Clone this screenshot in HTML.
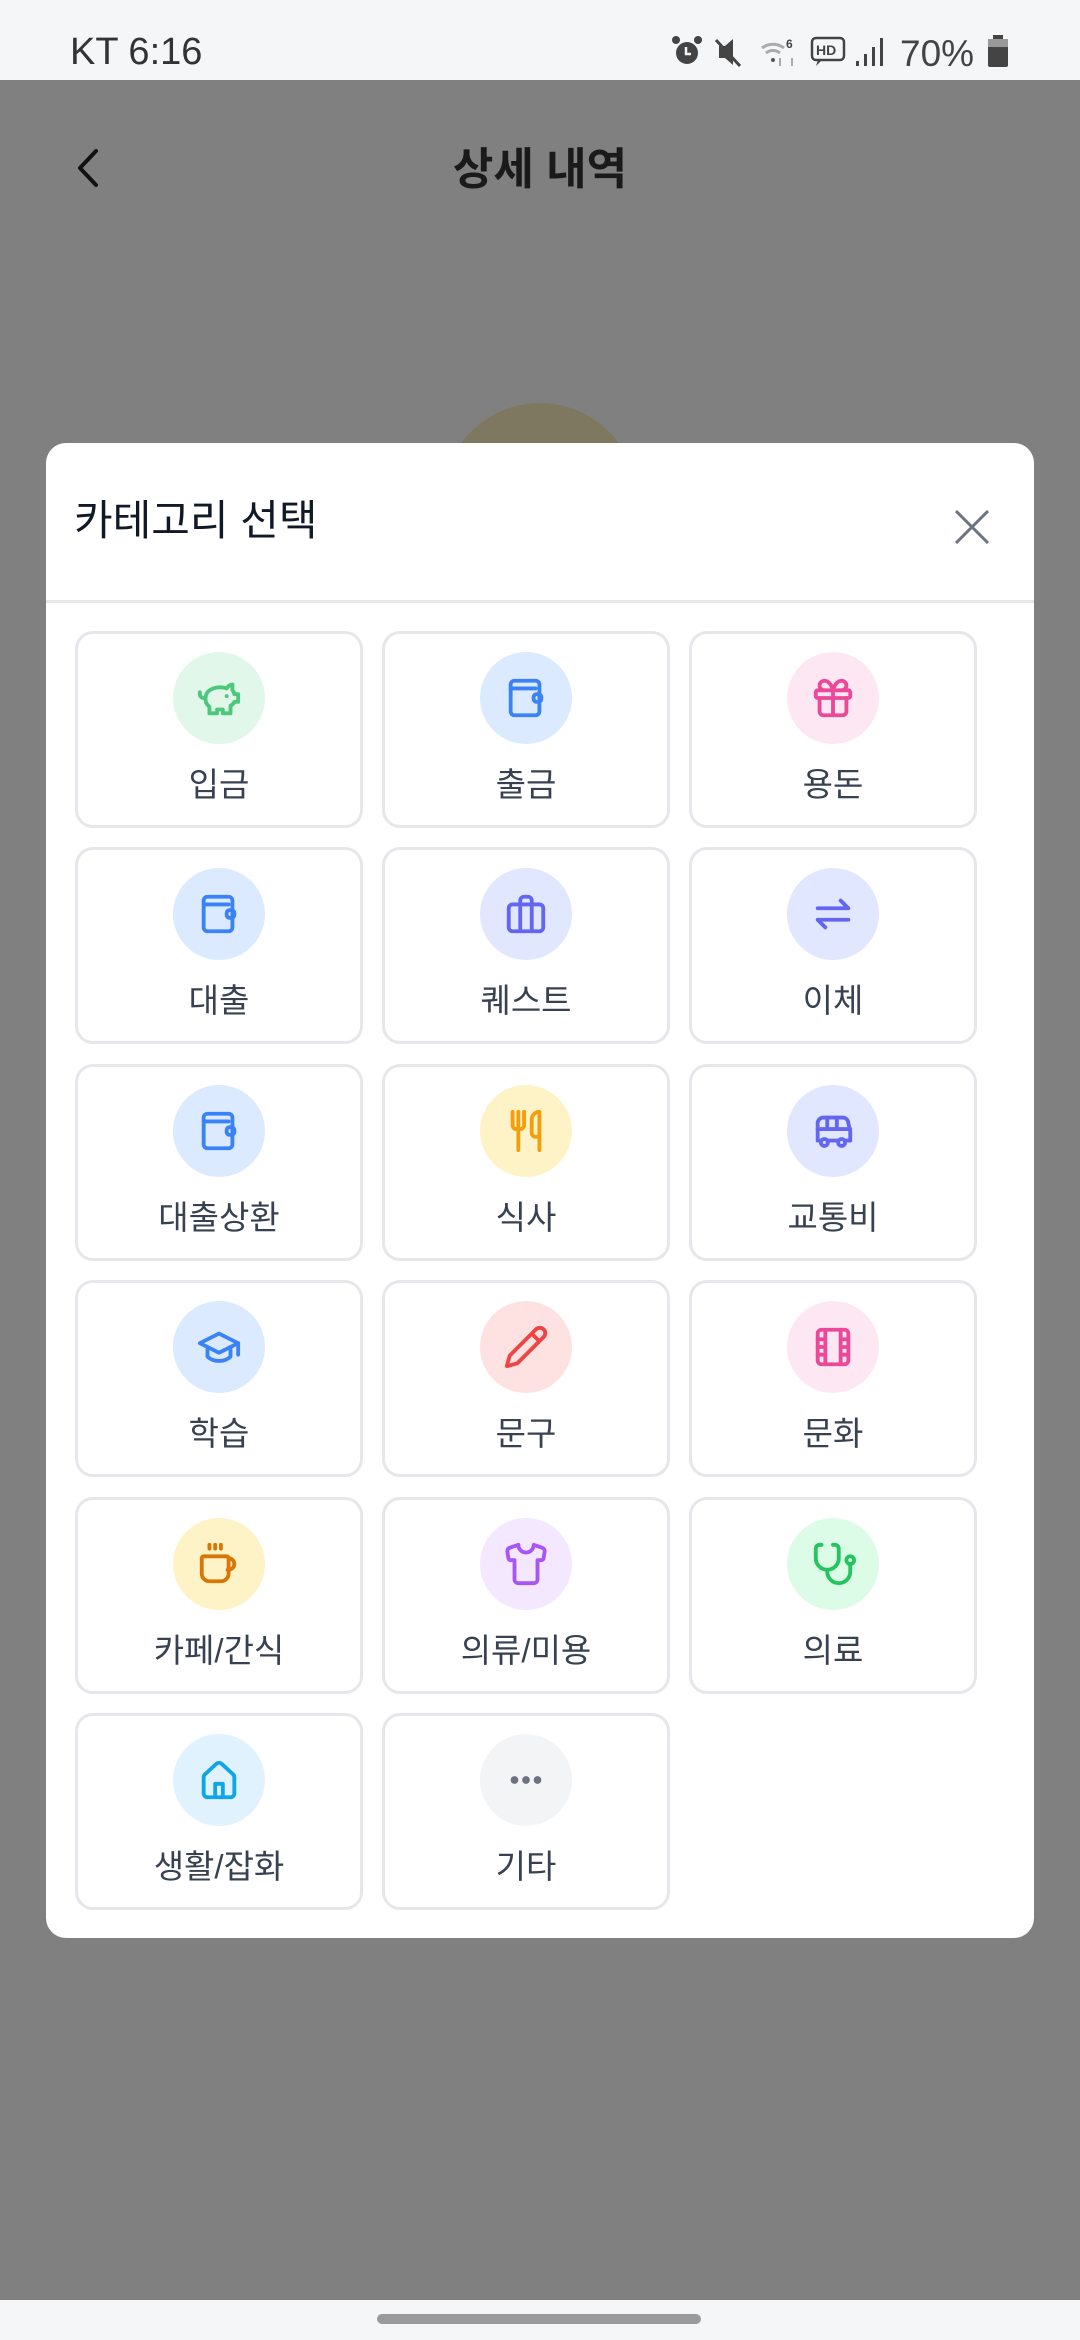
<!DOCTYPE html>
<html><head><meta charset="utf-8">
<style>
*{margin:0;padding:0;box-sizing:border-box}
body{width:1080px;height:2340px;position:relative;overflow:hidden;background:#808080;font-family:"Liberation Sans","Noto Sans CJK KR",sans-serif}
.sb{position:absolute;left:0;top:0;width:1080px;height:80px;background:#f5f6f8}
.nav{position:absolute;left:0;top:2300px;width:1080px;height:40px;background:#f5f6f8}
.home{position:absolute;left:377px;top:2314px;width:324px;height:10px;border-radius:5px;background:#9a9a9c}
.modal{position:absolute;left:46px;top:443px;width:988px;height:1495px;background:#fff;border-radius:20px}
.card{position:absolute;width:288px;height:197px;border:3px solid #e6e7ea;border-radius:18px;background:#fff}
.circ{position:absolute;left:95px;top:18px;width:92px;height:92px;border-radius:50%;display:flex;align-items:center;justify-content:center}
.lbl{position:absolute;left:0;right:0;top:131px;text-align:center;font-size:33px;color:#374151;line-height:40px}
svg.i{width:46px;height:46px;fill:none;stroke-width:2;stroke-linecap:round;stroke-linejoin:round}
</style></head><body>
<div class="sb">
 <div style="position:absolute;left:70px;top:30px;font-size:38px;color:#333;line-height:44px">KT 6:16</div>
 <svg style="position:absolute;left:670px;top:34px" width="340" height="36" viewBox="0 0 340 36">
  <g fill="#444">
   <circle cx="17" cy="19" r="11"/><circle cx="6" cy="6" r="4"/><circle cx="28" cy="6" r="4"/>
   <path d="M49 12h6l8-7v26l-8-7h-6z"/>
  </g>
  <path d="M16 13v7h5" stroke="#f5f6f8" stroke-width="2.5" fill="none"/>
  <path d="M46 6l24 26" stroke="#444" stroke-width="3"/>
  <path d="M92 14a18 18 0 0 1 22 0M96 19a11 11 0 0 1 14 0" stroke="#aaa" stroke-width="3" fill="none"/>
  <circle cx="103" cy="26" r="2" fill="#555"/>
  <text x="116" y="14" font-size="12" font-weight="bold" fill="#444" font-family="Liberation Sans">6</text>
  <path d="M110 24v8M122 32v-8" stroke="#aaa" stroke-width="2"/>
  <rect x="142" y="4" width="32" height="22" rx="4" stroke="#444" stroke-width="2.5" fill="none"/>
  <path d="M148 26l-2 6 6-6" fill="#444"/>
  <text x="146" y="21" font-size="14" font-weight="bold" fill="#444" font-family="Liberation Sans">HD</text>
  <rect x="186" y="27" width="3" height="5" fill="#444"/><rect x="194" y="20" width="3" height="12" fill="#444"/><rect x="202" y="13" width="3" height="19" fill="#444"/><rect x="210" y="4" width="3" height="28" fill="#444"/>
  <text x="230" y="32" font-size="37" fill="#444" font-family="Liberation Sans">70%</text>
  <rect x="318" y="5" width="20" height="28" rx="2" fill="#444"/><rect x="323" y="1" width="10" height="5" fill="#444"/><rect x="318" y="5" width="20" height="8" fill="#999"/>
 </svg>
</div>
<svg style="position:absolute;left:70px;top:145px" width="36" height="46" viewBox="0 0 36 46"><path d="M26 6L10 23l16 17" stroke="#111" stroke-width="4" fill="none" stroke-linecap="round" stroke-linejoin="round"/></svg>
<div style="position:absolute;left:0;width:1080px;top:142px;text-align:center;font-size:44px;font-weight:bold;color:#1a1a1a;line-height:56px">상세 내역</div>
<div style="position:absolute;left:443px;top:403px;width:194px;height:194px;border-radius:50%;background:#7e7860"></div>
<div class="modal">
 <div style="position:absolute;left:28px;top:50px;font-size:42px;color:#111827;line-height:56px">카테고리 선택</div>
 <svg style="position:absolute;left:906px;top:64px" width="40" height="40" viewBox="0 0 40 40"><path d="M4 4l32 32M36 4L4 36" stroke="#6b7280" stroke-width="3"/></svg>
 <div style="position:absolute;left:0;top:157px;width:988px;height:3px;background:#e5e7eb"></div>
</div>
<div class="nav"></div><div class="home"></div>

<div class="card" style="left:75px;top:631px"><div class="circ" style="background:#e0f7ea"><svg class="i" viewBox="0 0 24 24" stroke="#4cc77c"><path d="M19 5c-1.5 0-2.8 1.4-3 2-3.5-1.5-11-.3-11 5 0 1.8 0 3 2 4.5V20h4v-2h3v2h4v-4c1-.5 1.7-1 2-2h2v-4h-2c0-1-.5-1.5-1-2V5z"/><path d="M2 9v1c0 1.1.9 2 2 2h1"/><path d="M16 11h.01"/></svg></div><div class="lbl">입금</div></div>
<div class="card" style="left:382px;top:631px"><div class="circ" style="background:#dbeafe"><svg class="i" viewBox="0 0 24 24" stroke="#3b82f6"><rect x="4" y="3" width="15" height="18" rx="2"/><path d="M4 7h13"/><rect x="16" y="10" width="4" height="4" rx="1.5"/></svg></div><div class="lbl">출금</div></div>
<div class="card" style="left:689px;top:631px"><div class="circ" style="background:#fce7f3"><svg class="i" viewBox="0 0 24 24" stroke="#ec4899"><rect x="3" y="8" width="18" height="4" rx="1"/><path d="M12 8v13"/><path d="M19 12v7a2 2 0 0 1-2 2H7a2 2 0 0 1-2-2v-7"/><path d="M7.5 8a2.5 2.5 0 0 1 0-5A4.8 8 0 0 1 12 8a4.8 8 0 0 1 4.5-5 2.5 2.5 0 0 1 0 5"/></svg></div><div class="lbl">용돈</div></div>

<div class="card" style="left:75px;top:847px"><div class="circ" style="background:#dbeafe"><svg class="i" viewBox="0 0 24 24" stroke="#3b82f6"><rect x="4" y="3" width="15" height="18" rx="2"/><path d="M4 7h13"/><rect x="16" y="10" width="4" height="4" rx="1.5"/></svg></div><div class="lbl">대출</div></div>
<div class="card" style="left:382px;top:847px"><div class="circ" style="background:#e0e7ff"><svg class="i" viewBox="0 0 24 24" stroke="#6366f1"><rect x="3" y="7" width="18" height="14" rx="2"/><path d="M9 7V5a2 2 0 0 1 2-2h2a2 2 0 0 1 2 2v2"/><path d="M9 7v14M15 7v14"/></svg></div><div class="lbl">퀘스트</div></div>
<div class="card" style="left:689px;top:847px"><div class="circ" style="background:#e0e7ff"><svg class="i" viewBox="0 0 24 24" stroke="#6366f1"><path d="M4 9h16l-4-4"/><path d="M20 15H4l4 4"/></svg></div><div class="lbl">이체</div></div>

<div class="card" style="left:75px;top:1064px"><div class="circ" style="background:#dbeafe"><svg class="i" viewBox="0 0 24 24" stroke="#3b82f6"><rect x="4" y="3" width="15" height="18" rx="2"/><path d="M4 7h13"/><rect x="16" y="10" width="4" height="4" rx="1.5"/></svg></div><div class="lbl">대출상환</div></div>
<div class="card" style="left:382px;top:1064px"><div class="circ" style="background:#fef3c7"><svg class="i" viewBox="0 0 24 24" stroke="#f59e0b"><path d="M5 2v7c0 1.1.9 2 2 2h2a2 2 0 0 0 2-2V2"/><path d="M8 2v20"/><path d="M19 15V2a4 4 0 0 0-4 4v7c0 1.1.9 2 2 2h2zm0 0v7"/></svg></div><div class="lbl">식사</div></div>
<div class="card" style="left:689px;top:1064px"><div class="circ" style="background:#e0e7ff"><svg class="i" viewBox="0 0 24 24" stroke="#6366f1"><path d="M4 17V8a3 3 0 0 1 3-3h10a3 3 0 0 1 3 3l1 4v5z"/><path d="M4 11h17M9 5v6M14 5v6"/><circle cx="7.5" cy="18" r="1.8" style="fill:#e0e7ff"/><circle cx="16.5" cy="18" r="1.8" style="fill:#e0e7ff"/></svg></div><div class="lbl">교통비</div></div>

<div class="card" style="left:75px;top:1280px"><div class="circ" style="background:#dbeafe"><svg class="i" viewBox="0 0 24 24" stroke="#3b82f6"><path d="M22 10v6"/><path d="M2 10l10-5 10 5-10 5z"/><path d="M6 12v5c3 3 9 3 12 0v-5"/></svg></div><div class="lbl">학습</div></div>
<div class="card" style="left:382px;top:1280px"><div class="circ" style="background:#fee2e2"><svg class="i" viewBox="0 0 24 24" stroke="#ef4444"><path d="M17 3a2.85 2.83 0 1 1 4 4L7.5 20.5 2 22l1.5-5.5z"/><path d="M15 5l4 4"/></svg></div><div class="lbl">문구</div></div>
<div class="card" style="left:689px;top:1280px"><div class="circ" style="background:#fce7f3"><svg class="i" viewBox="0 0 24 24" stroke="#ec4899"><rect x="4" y="3" width="16" height="18" rx="2"/><path d="M8 3v18M16 3v18M4 8h4M4 12h4M4 16h4M16 8h4M16 12h4M16 16h4"/></svg></div><div class="lbl">문화</div></div>

<div class="card" style="left:75px;top:1497px"><div class="circ" style="background:#fef3c7"><svg class="i" viewBox="0 0 24 24" stroke="#d97706"><path d="M7 2v2M10 2v2M13 2v2"/><path d="M16 8a1 1 0 0 1 1 1v8a4 4 0 0 1-4 4H7a4 4 0 0 1-4-4V9a1 1 0 0 1 1-1h12zM17 9a3 3 0 1 1 0 6h-.5"/></svg></div><div class="lbl">카페/간식</div></div>
<div class="card" style="left:382px;top:1497px"><div class="circ" style="background:#f3e8ff"><svg class="i" viewBox="0 0 24 24" stroke="#a855f7"><path d="M20.38 3.46 16 2a4 4 0 0 1-8 0L3.62 3.46a2 2 0 0 0-1.34 2.23l.58 3.47a1 1 0 0 0 .99.84H6v10c0 1.1.9 2 2 2h8a2 2 0 0 0 2-2V10h2.150a1 1 0 0 0 .99-.84l.58-3.47a2 2 0 0 0-1.34-2.23z"/></svg></div><div class="lbl">의류/미용</div></div>
<div class="card" style="left:689px;top:1497px"><div class="circ" style="background:#dcfce7"><svg class="i" viewBox="0 0 24 24" stroke="#22c55e"><path d="M6 2H5a2 2 0 0 0-2 2v5a6 6 0 0 0 12 0V4a2 2 0 0 0-2-2h-1"/><path d="M9 15v1a6 6 0 0 0 12 0v-4"/><circle cx="21" cy="10" r="2"/></svg></div><div class="lbl">의료</div></div>

<div class="card" style="left:75px;top:1713px"><div class="circ" style="background:#e0f2fe"><svg class="i" viewBox="0 0 24 24" stroke="#0ea5e9"><path d="M4 10.5a2 2 0 0 1 .7-1.5l6-5.5a2 2 0 0 1 2.6 0l6 5.5a2 2 0 0 1 .7 1.5V19a2 2 0 0 1-2 2H6a2 2 0 0 1-2-2z"/><path d="M10 21v-7h4v7"/></svg></div><div class="lbl">생활/잡화</div></div>
<div class="card" style="left:382px;top:1713px"><div class="circ" style="background:#f3f4f6"><svg width="46" height="46" viewBox="0 0 24 24"><circle cx="6" cy="12" r="2" style="fill:#6b7280"/><circle cx="12" cy="12" r="2" style="fill:#6b7280"/><circle cx="18" cy="12" r="2" style="fill:#6b7280"/></svg></div><div class="lbl">기타</div></div>
</body></html>
